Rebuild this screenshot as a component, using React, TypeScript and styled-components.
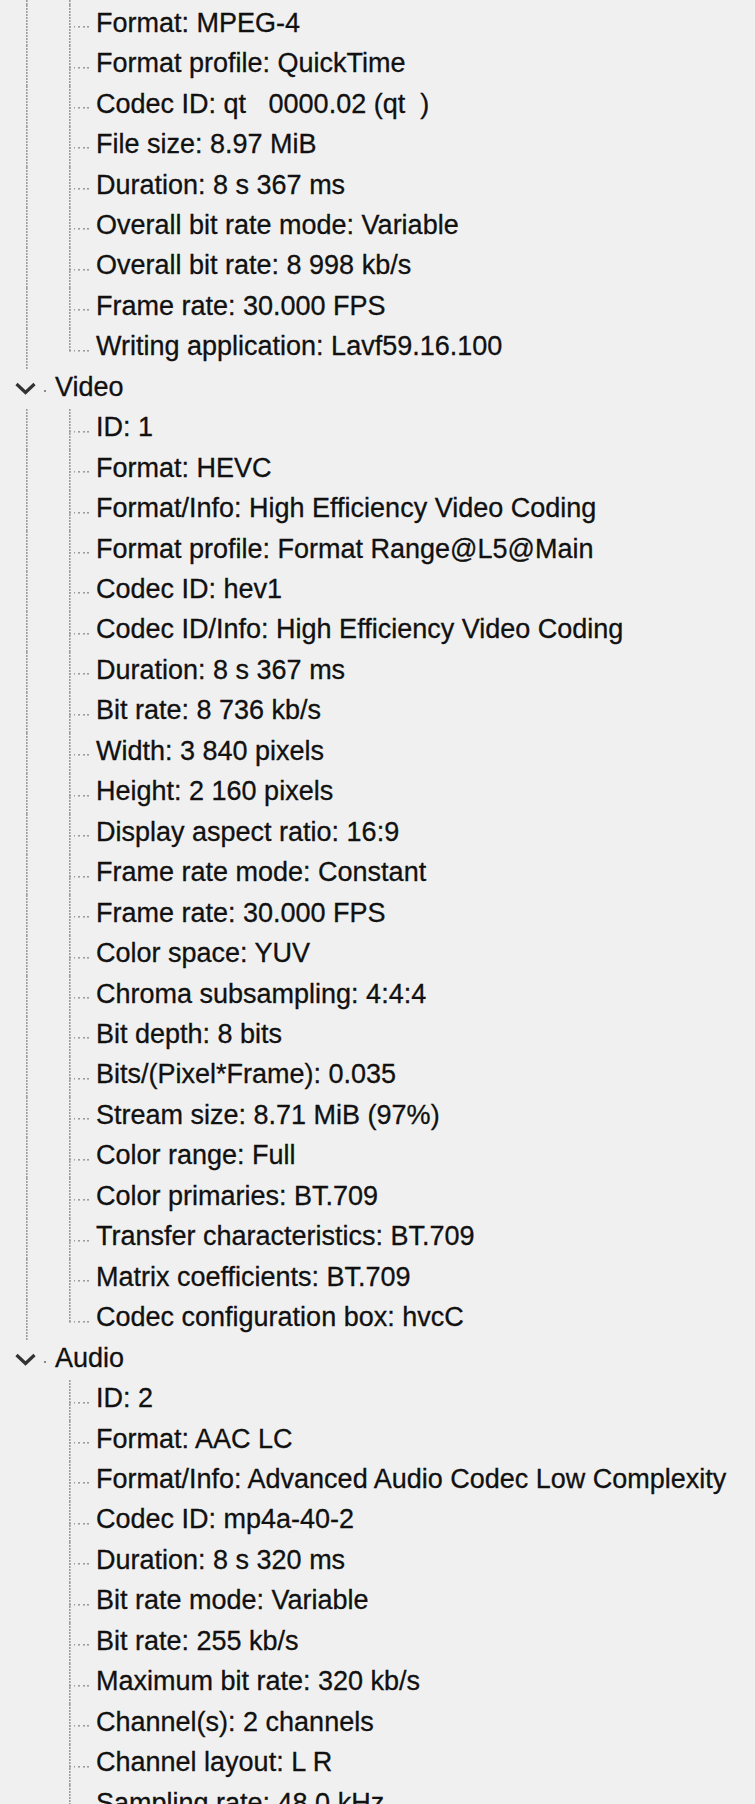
import styled, { createGlobalStyle } from 'styled-components'

// one tree row in the reference is 16px upscaled ~2.53x
const ROW = 40.46
// the view is scrolled: only the last few pixels of the row above "Format" show
const SCROLL_REST = 4.7

const GlobalStyle = createGlobalStyle`
    html, body {
        margin: 0;
        padding: 0;
        background: #f0f0f0;
        overflow: hidden;
    }
    body {
        font-family: "Liberation Sans", Arial, sans-serif;
    }
`

const vDots = 'repeating-linear-gradient(to bottom, #9c9c9c 0 1.6px, transparent 1.6px 3px)'
const hDots = 'repeating-linear-gradient(to right, #9c9c9c 0 1.8px, transparent 1.8px 4.6px)'

const Viewport = styled.div`
    height: 1804px;
    overflow: hidden;
    background: #f0f0f0;
    color: #111;
    font-size: 27px;
`

const Row = styled.div<{ $height?: number }>`
    display: flex;
    align-items: flex-start;
    height: ${p => p.$height ?? ROW}px;
`

const Label = styled.span<{ $indent: number }>`
    margin-left: ${p => p.$indent}px;
    padding-top: 3px;
    line-height: 30px;
    white-space: pre;
    -webkit-text-stroke: 0.3px #111;
`

const Expander = styled.span`
    display: flex;
    align-items: center;
    width: 52px;
    height: 100%;
    padding-left: 15px;
    box-sizing: border-box;
    flex: none;
    background: radial-gradient(circle, #8a8a8a 0 1px, transparent 1.2px) no-repeat;
    background-size: 4px 4px;
    background-position: 43px calc(50% + 2px);
    svg {
        display: block;
    }
`

const SiblingGuide = styled.span<{ $show: boolean }>`
    width: 54px;
    height: 100%;
    flex: none;
    background: ${p => (p.$show ? vDots : 'none')};
    background-repeat: no-repeat;
    background-size: 1.6px 100%;
    background-position: 26px 0;
`

const ChildGuide = styled.span<{ $last?: boolean; $connector?: boolean }>`
    width: 42px;
    height: 100%;
    flex: none;
    background: ${p => (p.$connector === false ? vDots : `${vDots}, ${hDots}`)};
    background-repeat: no-repeat;
    background-size: 1.6px ${p => (p.$last ? 'calc(50% + 2px)' : '100%')}, 23px 1.6px;
    background-position: 15px 0, 15px calc(50% + 2px);
`

const Chevron = () => (
    <svg width="21" height="13" viewBox="0 0 21 13">
        <polyline points="1.5,2 10.5,10.5 19.5,2" fill="none" stroke="#333" strokeWidth="3.2" />
    </svg>
)

interface ISection {
    title: string
    items: string[]
    scrolledPast?: boolean
}

const sections: ISection[] = [
    {
        // header and first items are scrolled above the window
        title: 'General',
        scrolledPast: true,
        items: [
            'Format: MPEG-4',
            'Format profile: QuickTime',
            'Codec ID: qt   0000.02 (qt  )',
            'File size: 8.97 MiB',
            'Duration: 8 s 367 ms',
            'Overall bit rate mode: Variable',
            'Overall bit rate: 8 998 kb/s',
            'Frame rate: 30.000 FPS',
            'Writing application: Lavf59.16.100',
        ],
    },
    {
        title: 'Video',
        items: [
            'ID: 1',
            'Format: HEVC',
            'Format/Info: High Efficiency Video Coding',
            'Format profile: Format Range@L5@Main',
            'Codec ID: hev1',
            'Codec ID/Info: High Efficiency Video Coding',
            'Duration: 8 s 367 ms',
            'Bit rate: 8 736 kb/s',
            'Width: 3 840 pixels',
            'Height: 2 160 pixels',
            'Display aspect ratio: 16:9',
            'Frame rate mode: Constant',
            'Frame rate: 30.000 FPS',
            'Color space: YUV',
            'Chroma subsampling: 4:4:4',
            'Bit depth: 8 bits',
            'Bits/(Pixel*Frame): 0.035',
            'Stream size: 8.71 MiB (97%)',
            'Color range: Full',
            'Color primaries: BT.709',
            'Transfer characteristics: BT.709',
            'Matrix coefficients: BT.709',
            'Codec configuration box: hvcC',
        ],
    },
    {
        title: 'Audio',
        items: [
            'ID: 2',
            'Format: AAC LC',
            'Format/Info: Advanced Audio Codec Low Complexity',
            'Codec ID: mp4a-40-2',
            'Duration: 8 s 320 ms',
            'Bit rate mode: Variable',
            'Bit rate: 255 kb/s',
            'Maximum bit rate: 320 kb/s',
            'Channel(s): 2 channels',
            'Channel layout: L R',
            'Sampling rate: 48.0 kHz',
            'Frame rate: 46.875 FPS (1024 SPF)',
        ],
    },
]

const App = () => {
    return (
        <Viewport>
            <GlobalStyle />
            {sections.map((section, si) => {
                const lastSection = si === sections.length - 1
                return (
                    <div key={section.title}>
                        {section.scrolledPast ? (
                            <Row $height={SCROLL_REST}>
                                <SiblingGuide $show={!lastSection} />
                                <ChildGuide $connector={false} />
                            </Row>
                        ) : (
                            <Row>
                                <Expander>
                                    <Chevron />
                                </Expander>
                                <Label $indent={3}>{section.title}</Label>
                            </Row>
                        )}
                        {section.items.map((item, i) => (
                            <Row key={item}>
                                <SiblingGuide $show={!lastSection} />
                                <ChildGuide $last={i === section.items.length - 1} />
                                <Label $indent={0}>{item}</Label>
                            </Row>
                        ))}
                    </div>
                )
            })}
        </Viewport>
    )
}

export default App
